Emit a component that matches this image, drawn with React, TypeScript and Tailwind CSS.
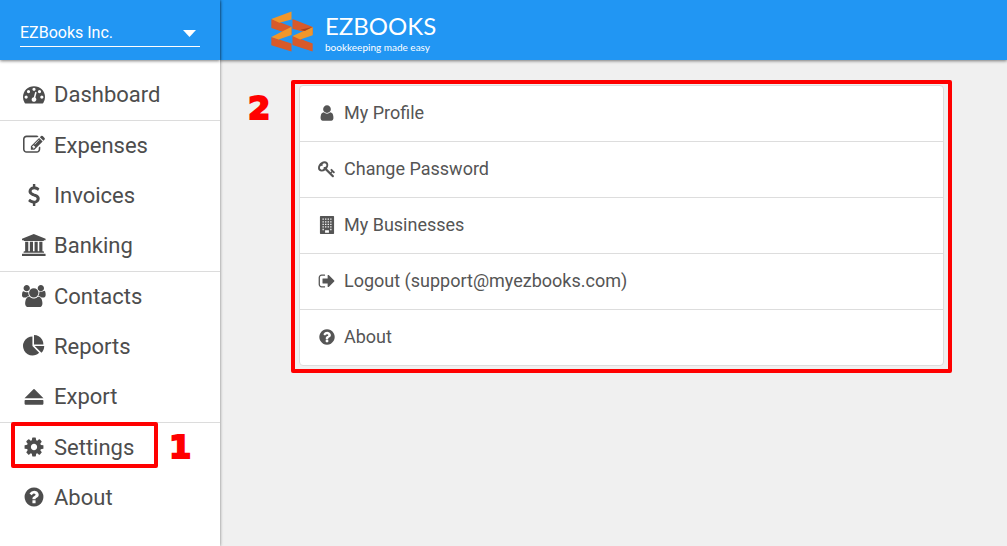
import type { ReactNode } from "react";

interface IconProps {
  width?: number;
  children: ReactNode;
  className?: string;
}

const Icon = ({ width = 1792, children, className = "h-[22px]" }: IconProps) => (
  <svg viewBox={`0 0 ${width} 1792`} className={`${className} w-auto shrink-0`} fill="currentColor" aria-hidden="true">
    {children}
  </svg>
);

const TACHOMETER =
  "M384 1152q0-53-37.5-90.5t-90.5-37.5-90.5 37.5-37.5 90.5 37.5 90.5 90.5 37.5 90.5-37.5 37.5-90.5zm192-448q0-53-37.5-90.5t-90.5-37.5-90.5 37.5-37.5 90.5 37.5 90.5 90.5 37.5 90.5-37.5 37.5-90.5zm428 481l101-382q6-26-7.5-48.5t-38.5-29.5-48 6.5-30 39.5l-101 382q-60 5-107 43.5t-63 98.5q-20 77 20 146t117 89 146-20 89-117q16-60-6-117t-72-91zm660-33q0-53-37.5-90.5t-90.5-37.5-90.5 37.5-37.5 90.5 37.5 90.5 90.5 37.5 90.5-37.5 37.5-90.5zm-640-640q0-53-37.5-90.5t-90.5-37.5-90.5 37.5-37.5 90.5 37.5 90.5 90.5 37.5 90.5-37.5 37.5-90.5zm448 192q0-53-37.5-90.5t-90.5-37.5-90.5 37.5-37.5 90.5 37.5 90.5 90.5 37.5 90.5-37.5 37.5-90.5zm320 448q0 261-141 483-19 29-54 29h-1402q-35 0-54-29-141-221-141-483 0-182 71-348t191-286 286-191 348-71 348 71 286 191 191 286 71 348z";
const PENCIL_SQUARE =
  "M888 1184l116-116-152-152-116 116v56h96v96h56zm440-720q-16-16-33 1l-350 350q-17 17-1 33t33-1l350-350q17-17 1-33zm80 594v190q0 119-84.5 203.5t-203.5 84.5h-832q-119 0-203.5-84.5t-84.5-203.5v-832q0-119 84.5-203.5t203.5-84.5h832q63 0 117 25 15 7 18 23 3 17-9 29l-49 49q-14 14-32 8-23-6-45-6h-832q-66 0-113 47t-47 113v832q0 66 47 113t113 47h832q66 0 113-47t47-113v-126q0-13 9-22l64-64q15-15 35-7t20 29zm-96-738l288 288-672 672h-288v-288zm444 132l-92 92-288-288 92-92q28-28 68-28t68 28l152 152q28 28 28 68t-28 68z";
const DOLLAR =
  "M1362 1185q0 153-99.5 263.5t-258.5 136.5v175q0 14-9 23t-23 9h-135q-13 0-22.5-9.5t-9.5-22.5v-175q-66-9-127.5-31t-101.5-44.5-74-48-46.5-37.5-17.5-18q-17-21-2-41l103-135q7-10 23-12 15-2 24 9l2 2q113 99 243 125 37 8 74 8 81 0 142.5-43t61.5-122q0-28-15-53t-33.5-42-58.5-37.5-66-32-80-32.5q-39-16-61.5-25t-61.5-26.5-62.5-31-56.5-35.5-53.5-42.5-43.5-49-35.5-58-21-66.5-8.5-78q0-138 98-242t255-134v-180q0-13 9.5-22.5t22.5-9.5h135q14 0 23 9t9 23v176q57 6 110.5 23t87 33.5 63.5 37.5 39 29 15 14q17 18 5 38l-81 146q-8 15-23 16-14 3-27-7-3-3-14.5-12t-39-26.5-58.5-32-74.5-26-85.5-11.5q-95 0-155 43t-60 111q0 26 8.5 48t29.5 41.5 39.5 33 56 31 60.5 27 70 27.5q53 20 81 31.5t76 35 75.5 42.5 62 50 53 63.5 31.5 76.5 13 94z";
const BANK =
  "M960 0l960 384v128h-128q0 26-20.5 45t-48.5 19h-1526q-28 0-48.5-19t-20.5-45h-128v-128zm-704 640h256v768h128v-768h256v768h128v-768h256v768h128v-768h256v768h59q28 0 48.5 19t20.5 45v64h-1664v-64q0-26 20.5-45t48.5-19h59v-768zm1595 960q28 0 48.5 19t20.5 45v128h-1920v-128q0-26 20.5-45t48.5-19h1782z";
const USERS =
  "M593 896q-162 5-265 128h-134q-82 0-138-40.5t-56-118.5q0-353 124-353 6 0 43.5 21t97.5 42.5 119 21.5q67 0 133-23-5 37-5 66 0 159 90 301zm1071 637q0 120-73 189.5t-194 69.5h-874q-121 0-194-69.5t-73-189.5q0-53 3.5-103.5t14-109 26.5-108.5 43-97.5 62-81 85.5-53.5 111.5-20q10 0 43 21.5t73 48 107 48 135 21.5 135-21.5 107-48 73-48 43-21.5q61 0 111.5 20t85.5 53.5 62 81 43 97.5 26.5 108.5 14 109 3.5 103.5zm-1024-1277q0 106-75 181t-181 75-181-75-75-181 75-181 181-75 181 75 75 181zm704 384q0 159-112.5 271.5t-271.5 112.5-271.5-112.5-112.5-271.5 112.5-271.5 271.5-112.5 271.5 112.5 112.5 271.5zm576 225q0 78-56 118.5t-138 40.5h-134q-103-123-265-128 90-142 90-301 0-29-5-66 66 23 133 23 59 0 119-21.5t97.5-42.5 43.5-21q124 0 124 353zm-128-609q0 106-75 181t-181 75-181-75-75-181 75-181 181-75 181 75 75 181z";
const PIE =
  "M768 890l546 546q-106 108-247.5 168t-298.5 60q-209 0-385.5-103t-279.5-279.5-103-385.5 103-385.5 279.5-279.5 385.5-103v762zm187 6h773q0 157-60 298.5t-168 247.5zm709-128h-768v-768q209 0 385.5 103t279.5 279.5 103 385.5z";
const EJECT =
  "M142 1053l710-710q19-19 44-19t44 19l710 710q32 35-13 35h-1482q-45 0-13-35zM192 1216h1408q64 0 64 64v256q0 64-64 64h-1408q-64 0-64-64v-256q0-64 64-64z";
const COG =
  "M1152 896q0-106-75-181t-181-75-181 75-75 181 75 181 181 75 181-75 75-181zm512-109v222q0 12-8 23t-20 13l-185 28q-19 54-39 91 35 50 107 138 10 12 10 25t-9 23q-27 37-99 108t-94 71q-12 0-26-9l-138-108q-44 23-91 38-16 136-29 186-7 28-36 28h-222q-14 0-24.5-8.5t-11.5-21.5l-28-184q-49-16-90-37l-141 107q-10 9-25 9-14 0-25-11-126-114-165-168-7-10-7-23 0-12 8-23 15-21 51-66.5t54-70.5q-27-50-41-99l-183-27q-13-2-21-12.5t-8-23.5v-222q0-12 8-23t19-13l186-28q14-46 39-92-40-57-107-138-10-12-10-24 0-10 9-23 26-36 98.5-107.5t94.5-71.5q13 0 26 10l138 107q44-23 91-38 16-136 29-186 7-28 36-28h222q14 0 24.5 8.5t11.5 21.5l28 184q49 16 90 37l142-107q9-9 24-9 13 0 25 10 129 119 165 170 7 8 7 22 0 12-8 23-15 21-51 66.5t-54 70.5q26 50 41 98l183 28q13 2 21 12.5t8 23.5z";
const QUESTION =
  "M1024 1376v-192q0-14-9-23t-23-9h-192q-14 0-23 9t-9 23v192q0 14 9 23t23 9h192q14 0 23-9t9-23zm256-672q0-88-55.5-163t-138.5-116-170-41q-243 0-371 213-15 24 8 42l132 100q7 6 19 6 16 0 25-12 53-68 86-92 34-24 86-24 48 0 85.5 26t37.5 59q0 38-20 61t-68 45q-63 28-115.5 86.5t-52.5 125.5v36q0 14 9 23t23 9h192q14 0 23-9t9-23q0-19 21.5-49.5t54.5-49.5q32-18 49-28.5t46-35 44.5-48 28-60.5 12.5-81zm384 192q0 209-103 385.5t-279.5 279.5-385.5 103-385.5-103-279.5-279.5-103-385.5 103-385.5 279.5-279.5 385.5-103 385.5 103 279.5 279.5 103 385.5z";
const USER =
  "M1536 1399q0 109-62.5 187t-150.5 78h-854q-88 0-150.5-78t-62.5-187q0-85 8.5-160.5t31.5-152 58.5-131 94-89 134.5-34.5q131 128 313 128t313-128q76 0 134.5 34.5t94 89 58.5 131 31.5 152 8.5 160.5zm-256-887q0 159-112.5 271.5t-271.5 112.5-271.5-112.5-112.5-271.5 112.5-271.5 271.5-112.5 271.5 112.5 112.5 271.5z";
const KEY =
  "M832 512q0-80-56-136t-136-56-136 56-56 136q0 42 19 83-41-19-83-19-80 0-136 56t-56 136 56 136 136 56 136-56 56-136q0-42-19-83 41 19 83 19 80 0 136-56t56-136zm851 704q0 17-49 66t-66 49q-9 0-28.5-16t-36.5-33-38.5-40-24.5-26l-96 96 220 220q28 28 28 68 0 42-39 81t-81 39q-40 0-68-28l-671-671q-176 131-365 131-163 0-265.5-102.5t-102.5-265.5q0-160 95-313t248-248 313-95q163 0 265.5 102.5t102.5 265.5q0 189-131 365l355 355 96-96q-3-3-26-24.5t-40-38.5-33-36.5-16-28.5q0-17 49-66t66-49q13 0 23 10 6 6 46 44.5t82 79.5 86.5 86 73 78 28.5 41z";
const BUILDING =
  "M256 0h1280q64 0 64 64v1664q0 64-64 64h-1280q-64 0-64-64v-1664q0-64 64-64zM448 256v128h128v-128zM704 256v128h128v-128zM960 256v128h128v-128zM1216 256v128h128v-128zM448 512v128h128v-128zM704 512v128h128v-128zM960 512v128h128v-128zM1216 512v128h128v-128zM448 768v128h128v-128zM704 768v128h128v-128zM960 768v128h128v-128zM1216 768v128h128v-128zM448 1024v128h128v-128zM704 1024v128h128v-128zM960 1024v128h128v-128zM1216 1024v128h128v-128zM448 1280v128h128v-128zM1216 1280v128h128v-128zM704 1408v256h384v-256z";
const SIGN_OUT =
  "M704 1440q0 4 1 20t.5 26.5-3 23.5-10 19.5-20.5 6.5h-320q-119 0-203.5-84.5t-84.5-203.5v-704q0-119 84.5-203.5t203.5-84.5h320q13 0 22.5 9.5t9.5 22.5q0 4 1 20t.5 26.5-3 23.5-10 19.5-20.5 6.5h-320q-66 0-113 47t-47 113v704q0 66 47 113t113 47h312l11.5 1 11.5 3 8 5.5 7 9 2 13.5zm928-544q0 26-19 45l-544 544q-19 19-45 19t-45-19-19-45v-288h-448q-26 0-45-19t-19-45v-384q0-26 19-45t45-19h448v-288q0-26 19-45t45-19 45 19l544 544q19 19 19 45z";

interface Item {
  label: string;
  path: string;
  width?: number;
  marked?: boolean;
}

const navGroups: Item[][] = [
  [{ label: "Dashboard", path: TACHOMETER }],
  [
    { label: "Expenses", path: PENCIL_SQUARE },
    { label: "Invoices", path: DOLLAR },
    { label: "Banking", path: BANK, width: 1920 },
  ],
  [
    { label: "Contacts", path: USERS, width: 1920 },
    { label: "Reports", path: PIE },
    { label: "Export", path: EJECT },
  ],
  [
    { label: "Settings", path: COG, marked: true },
    { label: "About", path: QUESTION },
  ],
];

const settings: Item[] = [
  { label: "My Profile", path: USER },
  { label: "Change Password", path: KEY },
  { label: "My Businesses", path: BUILDING },
  { label: "Logout (support@myezbooks.com)", path: SIGN_OUT },
  { label: "About", path: QUESTION },
];

const Step = ({ children, className }: { children: ReactNode; className: string }) => (
  <span
    className={`absolute font-['DejaVu_Sans',sans-serif] text-[32px] leading-8 font-bold text-[#ff0000] [-webkit-text-stroke:2px_#ff0000] ${className}`}
  >
    {children}
  </span>
);

const Logo = () => (
  <a href="#" className="flex items-start gap-3 text-white">
    <svg viewBox="63 32 127 123" className="h-[41px] w-[42px]" aria-hidden="true">
      <path d="M64 56l61 23v24L64 83zM64 110l61 20v24l-61-19z" fill="#d85a2a" />
      <path d="M128 56l61 24v22l-61-17zM128 107l61 23v24l-61-20z" fill="#d85a2a" />
      <path d="M64 56l61-23v24L88 67zM64 110l61-31v25l-39 14z" fill="#f0962a" />
      <path d="M128 107l61-27v25l-38 13z" fill="#f0962a" />
      <path d="M152 88l37-8-24 12z" fill="#a8401c" />
    </svg>
    <span className="flex flex-col font-[Lato,sans-serif]">
      <span className="text-2xl leading-[30px]">EZBOOKS</span>
      <span className="text-[10px] leading-3">bookkeeping made easy</span>
    </span>
  </a>
);

const Sidebar = () => (
  <aside className="relative z-10 flex w-[220px] shrink-0 flex-col bg-white shadow-[0_0_3px_rgba(0,0,0,0.5)]">
    <div className="relative h-[60px] bg-[#2196f3] px-5 pt-5 shadow-[0_1px_3px_rgba(0,0,0,0.5)]">
      <div className="relative border-b border-white text-white">
        <select aria-label="Business" className="block h-[26px] w-full appearance-none bg-transparent text-base outline-none">
          <option>EZBooks Inc.</option>
        </select>
        <svg viewBox="0 0 13 7" className="pointer-events-none absolute top-[10px] right-1 h-[7px] w-[13px]" aria-hidden="true">
          <path d="M0 0h13L6.500 7z" fill="currentColor" />
        </svg>
      </div>
    </div>
    <nav className="divide-y divide-[#dcdcdc] pt-[10px] text-[22px] text-[#4d4d4d]">
      {navGroups.map((group) => (
        <div key={group[0].label}>
          {group.map((item) => (
            <a key={item.label} href="#" className="relative flex h-[50px] items-center gap-[6px] pb-0.5 pl-5">
              <span className="flex w-7 justify-center">
                <Icon width={item.width}>
                  <path d={item.path} />
                </Icon>
              </span>
              {item.label}
              {item.marked && (
                <>
                  <span className="absolute -top-px left-[11px] h-[46px] w-[147px] rounded-xs border-4 border-[#ff0000]" />
                  <Step className="top-2 left-[169px]">1</Step>
                </>
              )}
            </a>
          ))}
        </div>
      ))}
    </nav>
  </aside>
);

export default function App() {
  return (
    <div className="flex min-h-screen bg-[#f0f0f0] font-[Roboto,sans-serif]">
      <Sidebar />
      <div className="min-w-0 flex-1">
        <header className="flex h-[60px] items-start bg-[#2196f3] pt-[11px] pl-[51px] shadow-[0_1px_3px_rgba(0,0,0,0.5)]">
          <Logo />
        </header>
        <main className="relative pt-5 pr-[55px] pl-[71px]">
          <Step className="top-8 left-7">2</Step>
          <div className="rounded-xs border-4 border-[#ff0000] px-1 pt-px pb-[3px]">
            <ul className="divide-y divide-[#dddddd] rounded-sm border border-[#dddddd] bg-white text-lg text-[#555555]">
              {settings.map((item) => (
                <li key={item.label}>
                  <a href="#" className="flex h-[55px] items-center gap-[6px] pb-0.5 pl-[15px]">
                    <span className="flex w-[23px] justify-center">
                      <Icon className="h-[18px]">
                        <path d={item.path} />
                      </Icon>
                    </span>
                    {item.label}
                  </a>
                </li>
              ))}
            </ul>
          </div>
        </main>
      </div>
    </div>
  );
}
